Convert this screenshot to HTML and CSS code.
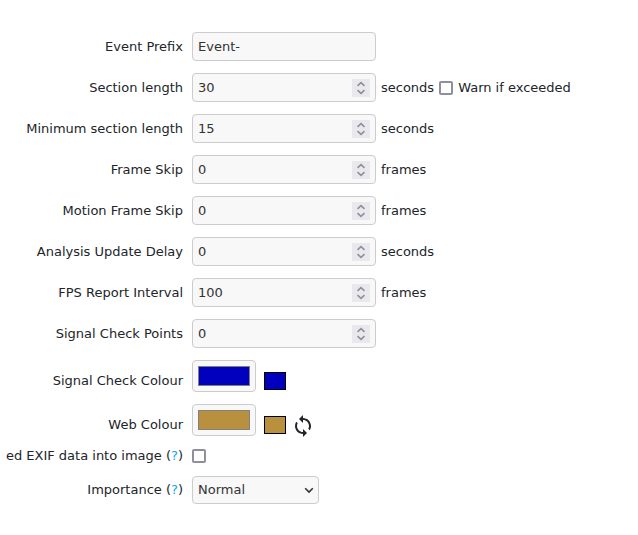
FILE: index.html
```
<!DOCTYPE html>
<html lang="en">
<head>
<meta charset="utf-8">
<title>Event settings</title>
<link rel="stylesheet" href="styles.css">
</head>
<body>
<svg width="0" height="0" class="defs" aria-hidden="true">
  <symbol id="spin" viewBox="0 0 18 18"><path d="M5.5 6.8 9 3.6l3.5 3.2M5.5 11.2l3.5 3.2 3.5-3.2"/></symbol>
</svg>
<form class="settings">
  <div class="row">
    <label class="name" for="prefix">Event Prefix</label>
    <div class="value"><input class="field" id="prefix" type="text" value="Event-"></div>
  </div>
  <div class="row">
    <label class="name" for="length">Section length</label>
    <div class="value">
      <span class="number"><input class="field" id="length" type="number" value="30"><svg class="spin"><use href="#spin"/></svg></span>
      <span>seconds</span>
      <input class="check" id="warn" type="checkbox"><label for="warn">Warn if exceeded</label>
    </div>
  </div>
  <div class="row">
    <label class="name" for="minimum">Minimum section length</label>
    <div class="value">
      <span class="number"><input class="field" id="minimum" type="number" value="15"><svg class="spin"><use href="#spin"/></svg></span>
      <span>seconds</span>
    </div>
  </div>
  <div class="row">
    <label class="name" for="skip">Frame Skip</label>
    <div class="value">
      <span class="number"><input class="field" id="skip" type="number" value="0"><svg class="spin"><use href="#spin"/></svg></span>
      <span>frames</span>
    </div>
  </div>
  <div class="row">
    <label class="name" for="motion">Motion Frame Skip</label>
    <div class="value">
      <span class="number"><input class="field" id="motion" type="number" value="0"><svg class="spin"><use href="#spin"/></svg></span>
      <span>frames</span>
    </div>
  </div>
  <div class="row">
    <label class="name" for="delay">Analysis Update Delay</label>
    <div class="value">
      <span class="number"><input class="field" id="delay" type="number" value="0"><svg class="spin"><use href="#spin"/></svg></span>
      <span>seconds</span>
    </div>
  </div>
  <div class="row">
    <label class="name" for="fps">FPS Report Interval</label>
    <div class="value">
      <span class="number"><input class="field" id="fps" type="number" value="100"><svg class="spin"><use href="#spin"/></svg></span>
      <span>frames</span>
    </div>
  </div>
  <div class="row">
    <label class="name" for="points">Signal Check Points</label>
    <div class="value">
      <span class="number"><input class="field" id="points" type="number" value="0"><svg class="spin"><use href="#spin"/></svg></span>
    </div>
  </div>
  <div class="row colour-row">
    <label class="name" for="signal">Signal Check Colour</label>
    <div class="value">
      <input class="colour" id="signal" type="color" value="#0000be">
      <span class="swatch signal"></span>
    </div>
  </div>
  <div class="row colour-row">
    <label class="name" for="web">Web Colour</label>
    <div class="value">
      <input class="colour" id="web" type="color" value="#b9913e">
      <span class="swatch web"></span>
      <button class="refresh" type="button" aria-label="Random colour"><svg viewBox="0 0 24 24"><path d="M12 4V1L8 5l4 4V6c3.31 0 6 2.69 6 6 0 1.01-.25 1.97-.7 2.8l1.46 1.46C19.54 15.03 20 13.57 20 12c0-4.42-3.58-8-8-8zm0 14c-3.31 0-6-2.69-6-6 0-1.01.25-1.97.7-2.8L5.24 7.74C4.46 8.97 4 10.43 4 12c0 4.42 3.58 8 8 8v3l4-4-4-4v3z"/></svg></button>
    </div>
  </div>
  <div class="row">
    <div class="name"><label for="exif">ed EXIF data into image</label> (<a href="#exif">?</a>)</div>
    <div class="value"><input class="check" id="exif" type="checkbox"></div>
  </div>
  <div class="row">
    <div class="name"><label for="importance">Importance</label> (<a href="#importance">?</a>)</div>
    <div class="value">
      <span class="choice"><select class="field" id="importance"><option>Normal</option></select><svg class="arrow" viewBox="0 0 10 10"><path d="M1.2 3.2 5 7l3.8-3.8"/></svg></span>
    </div>
  </div>
</form>
</body>
</html>
```
FILE: styles.css
```
* {
  box-sizing: border-box;
}

body {
  margin: 0;
  background: #fff;
  color: #212529;
  font: 13px/16px Verdana, "DejaVu Sans", sans-serif;
}

.defs {
  position: absolute;
}

.settings {
  display: grid;
  gap: 12px;
  padding-top: 32px;
}

.row {
  display: grid;
  grid-template-columns: 183px 1fr;
  column-gap: 9px;
  align-items: center;
}

.name {
  text-align: right;
  white-space: nowrap;
}

.value {
  display: flex;
  align-items: center;
  gap: 5px;
}

a {
  color: #03a9f4;
  text-decoration: none;
}

.field {
  display: block;
  width: 184px;
  height: 29px;
  margin: 0;
  padding: 0 5px;
  border: 1px solid #ccc;
  border-radius: 4px;
  background: #f8f8f8;
  color: #333;
  font: inherit;
  appearance: none;
}

input[type="number"] {
  appearance: textfield;
}

.number,
.choice {
  position: relative;
}

.spin {
  position: absolute;
  top: 6px;
  right: 6px;
  width: 18px;
  height: 18px;
  background: #e9e9ed;
  fill: none;
  stroke: #8f8f9d;
  stroke-width: 1.6;
  pointer-events: none;
}

.check {
  width: 14px;
  height: 14px;
  margin: 1px 0;
  border: 2px solid #8f8f9d;
  border-radius: 2px;
  background: #fff;
  appearance: none;
}

.check:checked {
  background: #0060df;
}

.colour-row .name {
  padding-top: 10px;
}

.colour-row .value {
  gap: 8px;
}

.colour {
  width: 64px;
  height: 32px;
  padding: 5px;
  border: 1px solid #ccc;
  border-radius: 4px;
  background: #f8f8f8;
  appearance: none;
}

.colour::-webkit-color-swatch-wrapper {
  padding: 0;
}

.colour::-webkit-color-swatch {
  border: 1px solid #808080;
  border-radius: 0;
}

.swatch {
  width: 22px;
  height: 18px;
  margin-top: 10px;
  border: 1px solid #000;
}

.signal {
  background: #0000be;
}

.web {
  background: #b9913e;
}

.refresh {
  display: flex;
  align-items: center;
  width: 24px;
  height: 20px;
  margin: 12px 0 0 -3px;
  padding: 0;
  border: 0;
  background: none;
  fill: #212529;
}

.refresh svg {
  flex: none;
  width: 24px;
  height: 24px;
}

select.field {
  width: 127px;
  height: 28px;
}

.arrow {
  position: absolute;
  top: 9px;
  right: 5px;
  width: 10px;
  height: 10px;
  fill: none;
  stroke: #333;
  stroke-width: 1.6;
  pointer-events: none;
}
```
